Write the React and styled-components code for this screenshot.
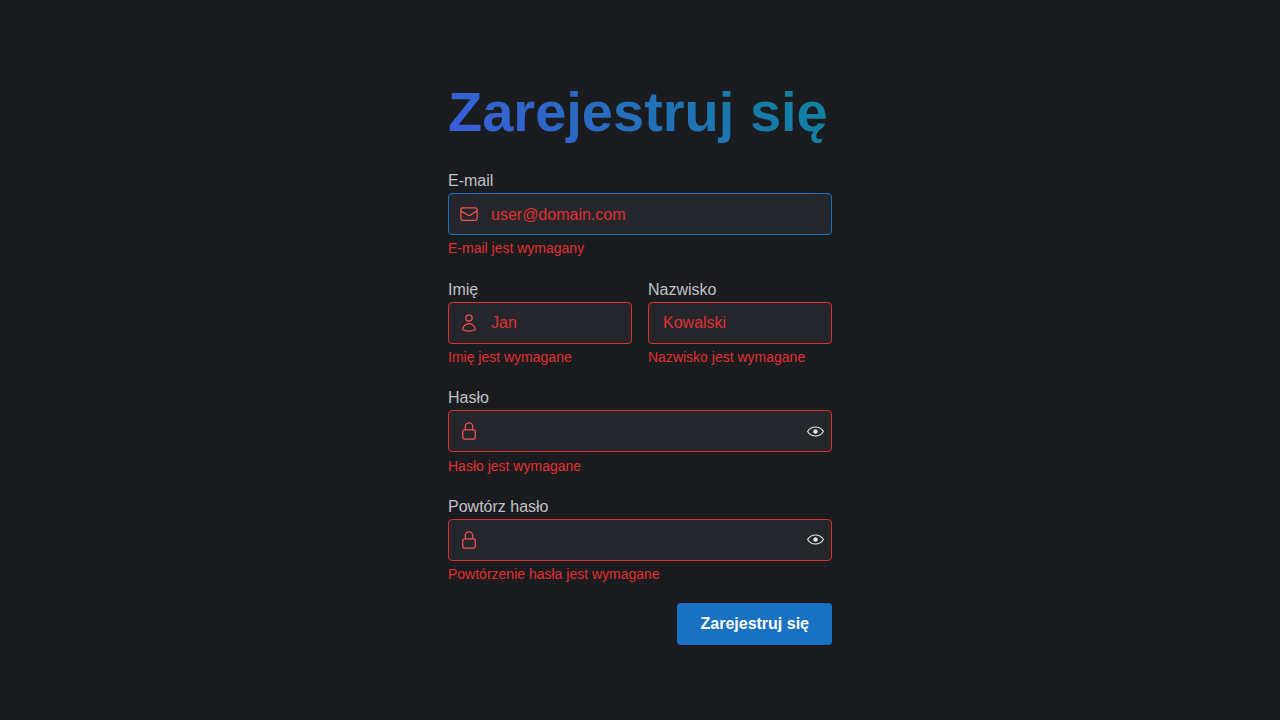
import React from "react";
import styled, { createGlobalStyle } from "styled-components";
import {
  HiOutlineEnvelope,
  HiOutlineUser,
  HiOutlineLockClosed,
} from "react-icons/hi2";

const GlobalStyle = createGlobalStyle`
  *, *::before, *::after { box-sizing: border-box; }
  body {
    margin: 0;
    background: #1a1b1e;
    color: #c1c2c5;
    font-family: "Liberation Sans", Arial, sans-serif;
    font-size: 16px;
    line-height: 1.55;
  }
`;

const Page = styled.main`
  min-height: 100vh;
  display: flex;
  align-items: center;
  justify-content: center;
`;

const Form = styled.form`
  width: 384px;
  display: flex;
  flex-direction: column;
  gap: 20px;
`;

const Title = styled.h1`
  margin: 0 0 -1px;
  padding-top: 1px;
  font-size: 56px;
  font-weight: 700;
  line-height: 1.3;
  white-space: nowrap;
  color: transparent;
  background-image: linear-gradient(45deg, #3b5bdb 0%, #0c8599 100%);
  background-clip: text;
  -webkit-background-clip: text;
`;

const Row = styled.div`
  display: grid;
  grid-template-columns: 1fr 1fr;
  gap: 16px;
`;

const FieldRoot = styled.div`
  display: flex;
  flex-direction: column;
  min-width: 0;
`;

const Label = styled.label`
  height: 24.8px;
  font-size: 16px;
  line-height: 26.8px;
`;

const InputBox = styled.div`
  display: flex;
  align-items: center;
  height: 42px;
  margin-bottom: 5.35px;
  background: #25262b;
  border: 1px solid ${(p) => (p.$active ? "#1971c2" : "#e03131")};
  border-radius: 4px;
`;

const LeftSection = styled.span`
  flex: none;
  width: 42px;
  height: 40px;
  margin-left: -1px;
  margin-right: 1px;
  display: flex;
  align-items: center;
  justify-content: center;
  color: #fa5252;
`;

const Input = styled.input`
  flex: 1;
  min-width: 0;
  height: 40px;
  margin: 0;
  padding: 1.3px 0 0 ${(p) => (p.$inset ? "14px" : "0")};
  border: 0;
  outline: 0;
  background: transparent;
  color: #e03131;
  font: inherit;
  line-height: normal;

  &::placeholder {
    color: #e03131;
    opacity: 1;
  }
`;

const ToggleButton = styled.button`
  flex: none;
  width: 28px;
  height: 28px;
  margin-right: 1.5px;
  padding: 0;
  border: 0;
  border-radius: 4px;
  background: transparent;
  color: #e9ecef;
  display: flex;
  align-items: center;
  justify-content: center;
`;

const ErrorText = styled.div`
  margin-bottom: -0.35px;
  font-size: 14px;
  line-height: 16.8px;
  color: #e03131;
`;

const SubmitButton = styled.button`
  align-self: flex-end;
  height: 42px;
  padding: 0 22px 0 22.4px;
  border: 1px solid transparent;
  border-radius: 4px;
  background: #1971c2;
  background-clip: border-box;
  color: #fff;
  font-family: inherit;
  font-size: 16px;
  font-weight: 600;
  line-height: 1;
`;

function EyeIcon() {
  return (
    <svg width="17" height="17" viewBox="0 0 15 15" fill="none">
      <path
        d="M7.5 11C4.80285 11 2.52952 9.62184 1.09622 7.50001C2.52952 5.37816 4.80285 4 7.5 4C10.1971 4 12.4705 5.37816 13.9038 7.50001C12.4705 9.62183 10.1971 11 7.5 11ZM7.5 3C4.30786 3 1.65639 4.70638 0.0760002 7.23501C-0.0253338 7.39715 -0.0253334 7.60288 0.0760014 7.76501C1.65639 10.2936 4.30786 12 7.5 12C10.6921 12 13.3436 10.2936 14.924 7.76501C15.0253 7.60288 15.0253 7.39715 14.924 7.23501C13.3436 4.70638 10.6921 3 7.5 3ZM7.5 9.5C8.60457 9.5 9.5 8.60457 9.5 7.5C9.5 6.39543 8.60457 5.5 7.5 5.5C6.39543 5.5 5.5 6.39543 5.5 7.5C5.5 8.60457 6.39543 9.5 7.5 9.5Z"
        fill="currentColor"
        fillRule="evenodd"
        clipRule="evenodd"
      />
    </svg>
  );
}

function Field({ id, label, error, icon: Icon, placeholder, password, active }) {
  return (
    <FieldRoot>
      <Label htmlFor={id}>{label}</Label>
      <InputBox $active={active}>
        {Icon && (
          <LeftSection>
            <Icon size={20} />
          </LeftSection>
        )}
        <Input
          id={id}
          type={password ? "password" : "text"}
          placeholder={placeholder}
          $inset={!Icon}
        />
        {password && (
          <ToggleButton type="button">
            <EyeIcon />
          </ToggleButton>
        )}
      </InputBox>
      <ErrorText>{error}</ErrorText>
    </FieldRoot>
  );
}

export default function App() {
  return (
    <>
      <GlobalStyle />
      <Page>
        <Form noValidate onSubmit={(e) => e.preventDefault()}>
          <Title>Zarejestruj się</Title>
          <Field
            id="email"
            label="E-mail"
            placeholder="user@domain.com"
            error="E-mail jest wymagany"
            icon={HiOutlineEnvelope}
            active
          />
          <Row>
            <Field
              id="first-name"
              label="Imię"
              placeholder="Jan"
              error="Imię jest wymagane"
              icon={HiOutlineUser}
            />
            <Field
              id="last-name"
              label="Nazwisko"
              placeholder="Kowalski"
              error="Nazwisko jest wymagane"
            />
          </Row>
          <Field
            id="password"
            label="Hasło"
            error="Hasło jest wymagane"
            icon={HiOutlineLockClosed}
            password
          />
          <Field
            id="repeat-password"
            label="Powtórz hasło"
            error="Powtórzenie hasła jest wymagane"
            icon={HiOutlineLockClosed}
            password
          />
          <SubmitButton type="submit">Zarejestruj się</SubmitButton>
        </Form>
      </Page>
    </>
  );
}
